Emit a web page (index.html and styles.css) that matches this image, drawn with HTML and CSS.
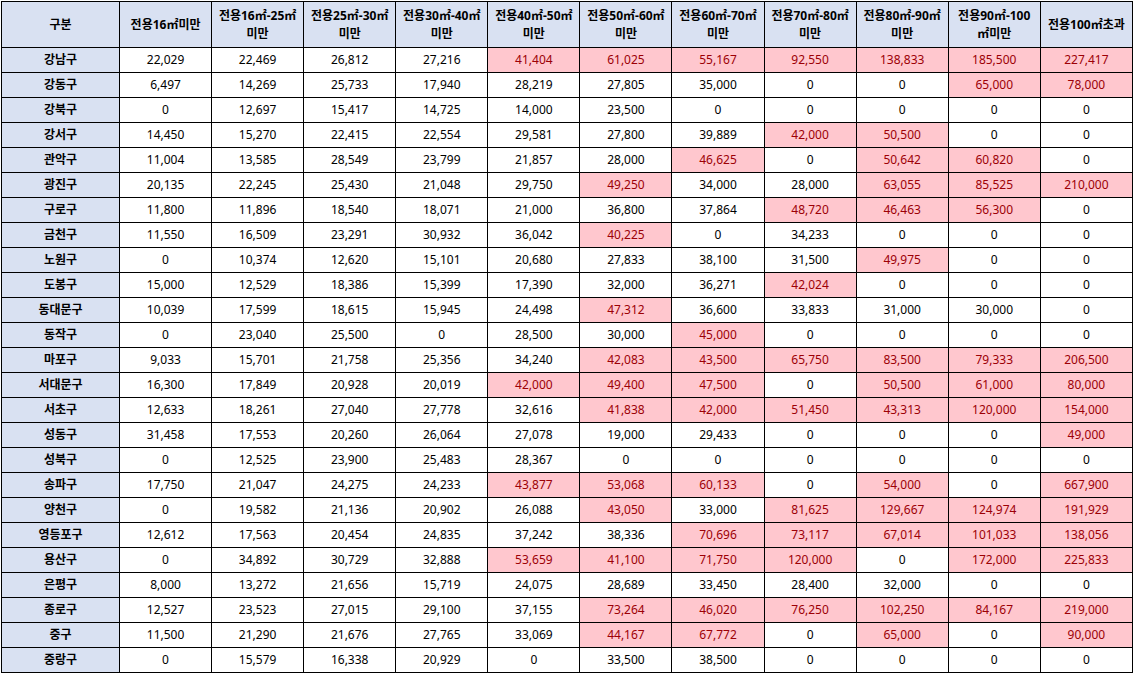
FILE: index.html
```html
<!DOCTYPE html>
<html lang="ko">
<head>
<meta charset="utf-8">
<title>서울 구별 전용면적별 가격</title>
<link rel="stylesheet" href="styles.css">
</head>
<body>
<div class="sheet">
<table class="grid">
<colgroup>
<col class="c-name">
<col span="11" class="c-val">
</colgroup>
<thead>
<tr>
<th>구분</th>
<th>전용16㎡미만</th>
<th>전용16㎡-25㎡<br>미만</th>
<th>전용25㎡-30㎡<br>미만</th>
<th>전용30㎡-40㎡<br>미만</th>
<th>전용40㎡-50㎡<br>미만</th>
<th>전용50㎡-60㎡<br>미만</th>
<th>전용60㎡-70㎡<br>미만</th>
<th>전용70㎡-80㎡<br>미만</th>
<th>전용80㎡-90㎡<br>미만</th>
<th>전용90㎡-100<br>㎡미만</th>
<th>전용100㎡초과</th>
</tr>
</thead>
<tbody>
<tr><th>강남구</th><td>22,029</td><td>22,469</td><td>26,812</td><td>27,216</td><td class="p">41,404</td><td class="p">61,025</td><td class="p">55,167</td><td class="p">92,550</td><td class="p">138,833</td><td class="p">185,500</td><td class="p">227,417</td></tr>
<tr><th>강동구</th><td>6,497</td><td>14,269</td><td>25,733</td><td>17,940</td><td>28,219</td><td>27,805</td><td>35,000</td><td>0</td><td>0</td><td class="p">65,000</td><td class="p">78,000</td></tr>
<tr><th>강북구</th><td>0</td><td>12,697</td><td>15,417</td><td>14,725</td><td>14,000</td><td>23,500</td><td>0</td><td>0</td><td>0</td><td>0</td><td>0</td></tr>
<tr><th>강서구</th><td>14,450</td><td>15,270</td><td>22,415</td><td>22,554</td><td>29,581</td><td>27,800</td><td>39,889</td><td class="p">42,000</td><td class="p">50,500</td><td>0</td><td>0</td></tr>
<tr><th>관악구</th><td>11,004</td><td>13,585</td><td>28,549</td><td>23,799</td><td>21,857</td><td>28,000</td><td class="p">46,625</td><td>0</td><td class="p">50,642</td><td class="p">60,820</td><td>0</td></tr>
<tr><th>광진구</th><td>20,135</td><td>22,245</td><td>25,430</td><td>21,048</td><td>29,750</td><td class="p">49,250</td><td>34,000</td><td>28,000</td><td class="p">63,055</td><td class="p">85,525</td><td class="p">210,000</td></tr>
<tr><th>구로구</th><td>11,800</td><td>11,896</td><td>18,540</td><td>18,071</td><td>21,000</td><td>36,800</td><td>37,864</td><td class="p">48,720</td><td class="p">46,463</td><td class="p">56,300</td><td>0</td></tr>
<tr><th>금천구</th><td>11,550</td><td>16,509</td><td>23,291</td><td>30,932</td><td>36,042</td><td class="p">40,225</td><td>0</td><td>34,233</td><td>0</td><td>0</td><td>0</td></tr>
<tr><th>노원구</th><td>0</td><td>10,374</td><td>12,620</td><td>15,101</td><td>20,680</td><td>27,833</td><td>38,100</td><td>31,500</td><td class="p">49,975</td><td>0</td><td>0</td></tr>
<tr><th>도봉구</th><td>15,000</td><td>12,529</td><td>18,386</td><td>15,399</td><td>17,390</td><td>32,000</td><td>36,271</td><td class="p">42,024</td><td>0</td><td>0</td><td>0</td></tr>
<tr><th>동대문구</th><td>10,039</td><td>17,599</td><td>18,615</td><td>15,945</td><td>24,498</td><td class="p">47,312</td><td>36,600</td><td>33,833</td><td>31,000</td><td>30,000</td><td>0</td></tr>
<tr><th>동작구</th><td>0</td><td>23,040</td><td>25,500</td><td>0</td><td>28,500</td><td>30,000</td><td class="p">45,000</td><td>0</td><td>0</td><td>0</td><td>0</td></tr>
<tr><th>마포구</th><td>9,033</td><td>15,701</td><td>21,758</td><td>25,356</td><td>34,240</td><td class="p">42,083</td><td class="p">43,500</td><td class="p">65,750</td><td class="p">83,500</td><td class="p">79,333</td><td class="p">206,500</td></tr>
<tr><th>서대문구</th><td>16,300</td><td>17,849</td><td>20,928</td><td>20,019</td><td class="p">42,000</td><td class="p">49,400</td><td class="p">47,500</td><td>0</td><td class="p">50,500</td><td class="p">61,000</td><td class="p">80,000</td></tr>
<tr><th>서초구</th><td>12,633</td><td>18,261</td><td>27,040</td><td>27,778</td><td>32,616</td><td class="p">41,838</td><td class="p">42,000</td><td class="p">51,450</td><td class="p">43,313</td><td class="p">120,000</td><td class="p">154,000</td></tr>
<tr><th>성동구</th><td>31,458</td><td>17,553</td><td>20,260</td><td>26,064</td><td>27,078</td><td>19,000</td><td>29,433</td><td>0</td><td>0</td><td>0</td><td class="p">49,000</td></tr>
<tr><th>성북구</th><td>0</td><td>12,525</td><td>23,900</td><td>25,483</td><td>28,367</td><td>0</td><td>0</td><td>0</td><td>0</td><td>0</td><td>0</td></tr>
<tr><th>송파구</th><td>17,750</td><td>21,047</td><td>24,275</td><td>24,233</td><td class="p">43,877</td><td class="p">53,068</td><td class="p">60,133</td><td>0</td><td class="p">54,000</td><td>0</td><td class="p">667,900</td></tr>
<tr><th>양천구</th><td>0</td><td>19,582</td><td>21,136</td><td>20,902</td><td>26,088</td><td class="p">43,050</td><td>33,000</td><td class="p">81,625</td><td class="p">129,667</td><td class="p">124,974</td><td class="p">191,929</td></tr>
<tr><th>영등포구</th><td>12,612</td><td>17,563</td><td>20,454</td><td>24,835</td><td>37,242</td><td>38,336</td><td class="p">70,696</td><td class="p">73,117</td><td class="p">67,014</td><td class="p">101,033</td><td class="p">138,056</td></tr>
<tr><th>용산구</th><td>0</td><td>34,892</td><td>30,729</td><td>32,888</td><td class="p">53,659</td><td class="p">41,100</td><td class="p">71,750</td><td class="p">120,000</td><td>0</td><td class="p">172,000</td><td class="p">225,833</td></tr>
<tr><th>은평구</th><td>8,000</td><td>13,272</td><td>21,656</td><td>15,719</td><td>24,075</td><td>28,689</td><td>33,450</td><td>28,400</td><td>32,000</td><td>0</td><td>0</td></tr>
<tr><th>종로구</th><td>12,527</td><td>23,523</td><td>27,015</td><td>29,100</td><td>37,155</td><td class="p">73,264</td><td class="p">46,020</td><td class="p">76,250</td><td class="p">102,250</td><td class="p">84,167</td><td class="p">219,000</td></tr>
<tr><th>중구</th><td>11,500</td><td>21,290</td><td>21,676</td><td>27,765</td><td>33,069</td><td class="p">44,167</td><td class="p">67,772</td><td>0</td><td class="p">65,000</td><td>0</td><td class="p">90,000</td></tr>
<tr><th>중랑구</th><td>0</td><td>15,579</td><td>16,338</td><td>20,929</td><td>0</td><td>33,500</td><td>38,500</td><td>0</td><td>0</td><td>0</td><td>0</td></tr>
</tbody>
</table>
</div>
</body>
</html>
```
FILE: styles.css
```css
html, body {
  margin: 0;
  padding: 0;
  background: #ffffff;
}

.sheet {
  padding: 1px 0 0 1px;
}

.grid {
  border-collapse: collapse;
  table-layout: fixed;
  width: 1132px;
  font-family: "Noto Sans", "Noto Sans CJK KR", sans-serif;
  font-size: 12px;
  color: #000000;
}

.c-name {
  width: 118px;
}

.grid th,
.grid td {
  border: 1px solid #000000;
  padding: 0;
  text-align: center;
  vertical-align: middle;
  height: 24px;
  line-height: 16px;
  white-space: nowrap;
  overflow: hidden;
}

.grid thead th {
  height: 45px;
  background: #d9e1f2;
  font-weight: 700;
  line-height: 18px;
}

.grid tbody th {
  background: #d9e1f2;
  font-weight: 700;
}

.grid td {
  font-weight: 400;
}

.grid td.p {
  background: #ffc7ce;
  color: #9c0006;
}
```
